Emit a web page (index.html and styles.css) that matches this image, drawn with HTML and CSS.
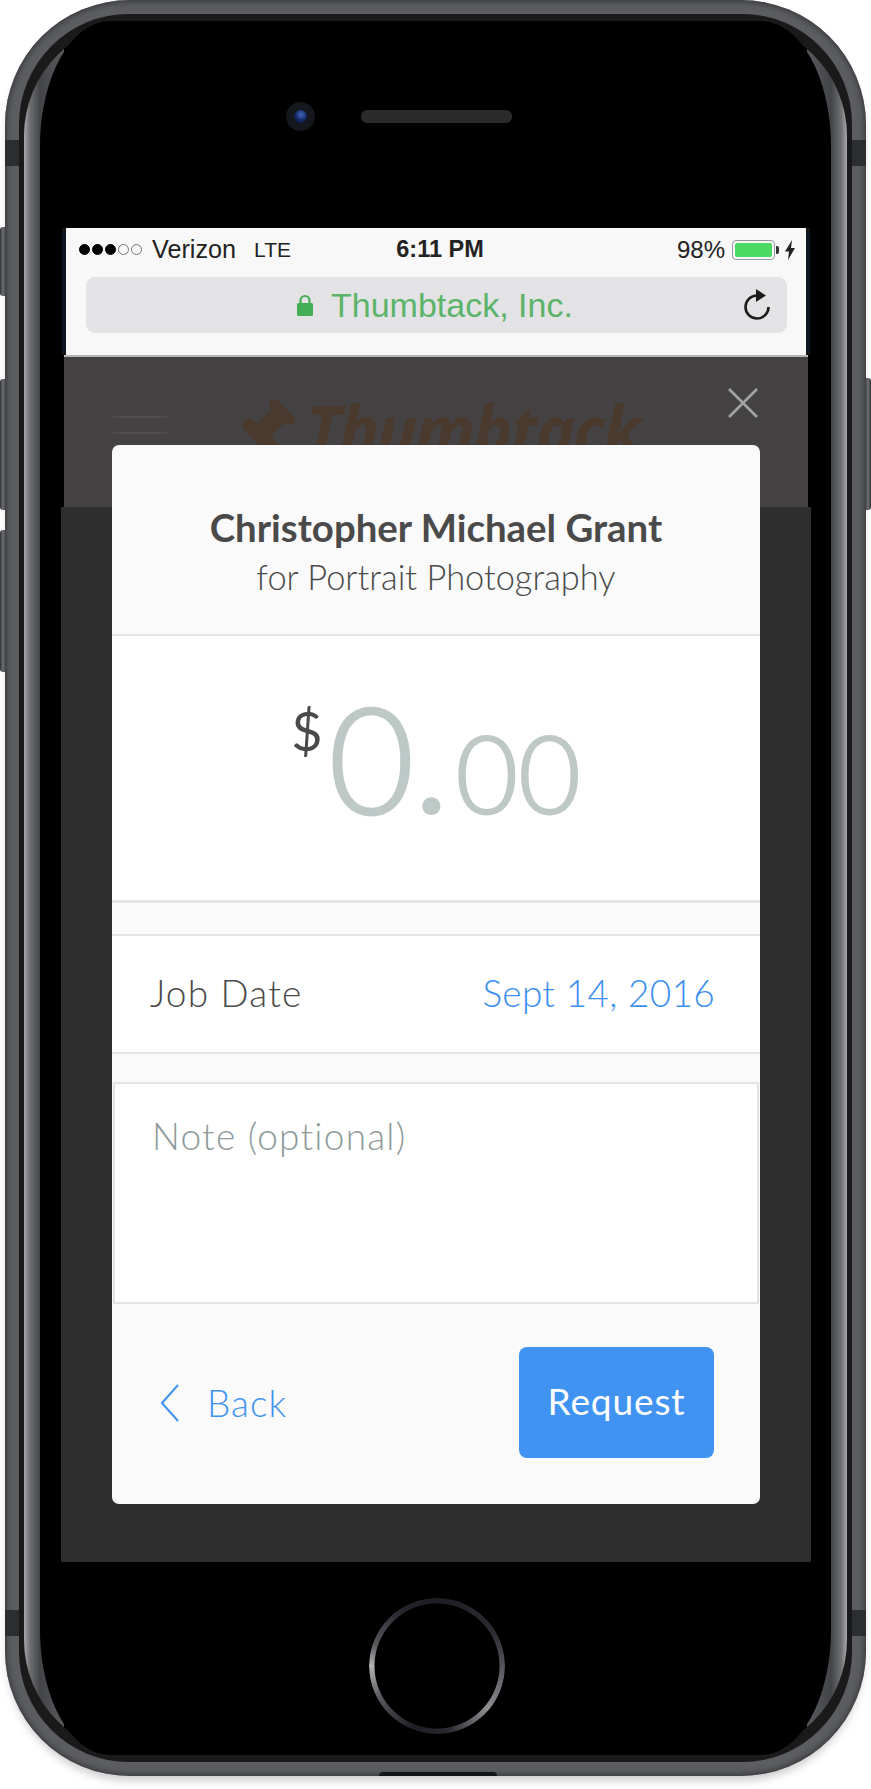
FILE: index.html
```html
<!DOCTYPE html>
<html lang="en">
    <head>
        <meta charset="UTF-8" />
        <meta name="viewport" content="width=device-width, initial-scale=1.0" />
        <link rel="stylesheet" href="styles.css">
        <title>Thumbtack payment request</title>
    </head>
    <body>
        <div class="side-btn mute"></div>
        <div class="side-btn vol-up"></div>
        <div class="side-btn vol-down"></div>
        <div class="side-btn power"></div>
        <div class="phone">
            <div class="antenna left top"></div>
            <div class="antenna right top"></div>
            <div class="antenna left bottom"></div>
            <div class="antenna right bottom"></div>
            <div class="bezel">
                <div class="glass">
                    <div class="face">
                        <div class="sensors">
                            <div class="camera"><span class="lens"></span></div>
                            <div class="speaker"></div>
                        </div>
                        <div class="screen">
                            <div class="chrome">
                                <div class="status">
                                    <div class="status-left">
                                        <span class="signal">
                                            <i class="on"></i><i class="on"></i><i class="on"></i><i></i><i></i>
                                        </span>
                                        <span class="carrier">Verizon</span>
                                        <span class="network">LTE</span>
                                    </div>
                                    <div class="clock">6:11 PM</div>
                                    <div class="status-right">
                                        <span>98%</span>
                                        <span class="battery"><span class="level"></span></span>
                                        <svg class="bolt" width="10" height="20" viewBox="0 0 10 20"><polygon points="7,0 0,11.5 4,11.5 3,20 10,8 6,8" fill="#222" /></svg>
                                    </div>
                                </div>
                                <div class="url-bar">
                                    <div class="url">
                                        <svg width="16" height="22" viewBox="0 0 16 22"><path d="M3.5 10V6.5a4.5 4.5 0 0 1 9 0V10" fill="none" stroke="#44ae57" stroke-width="2.2" /><rect x="0" y="9" width="16" height="13" rx="1.5" fill="#44ae57" /></svg>
                                        <span>Thumbtack, Inc.</span>
                                    </div>
                                    <svg class="reload" width="28" height="32" viewBox="0 0 28 32"><path d="M14 6.5A11.5 11.5 0 1 0 25.5 18" fill="none" stroke="#1c1c1c" stroke-width="2.6" /><polygon points="13,0 23,6.5 13,13" fill="#1c1c1c" /></svg>
                                </div>
                            </div>
                            <div class="site-header">
                                <div class="burger"><i></i><i></i><i></i></div>
                                <svg class="pin" width="70" height="70" viewBox="0 0 70 70">
                                    <g stroke="#4a3a2e" stroke-linecap="round" fill="none">
                                        <path d="M34 9L50 25" stroke-width="10" />
                                        <path d="M41 18L23 36" stroke-width="19" stroke-linecap="butt" />
                                        <path d="M9 30L33 54" stroke-width="14" />
                                    </g>
                                    <path d="M10 44L18 52" stroke="#444243" stroke-width="3" />
                                </svg>
                                <div class="wordmark">Thumbtack</div>
                                <svg class="close" width="30" height="30" viewBox="0 0 30 30"><path d="M1 1L29 29M29 1L1 29" stroke="#a3a3a3" stroke-width="2.6" /></svg>
                            </div>
                            <div class="page-body"></div>

                            <div class="modal">
                                <div class="modal-head">
                                    <div class="pro-name">Christopher Michael Grant</div>
                                    <div class="pro-job">for Portrait Photography</div>
                                </div>
                                <div class="amount">
                                    <span class="currency">$</span>
                                    <span class="dollars">0</span>
                                    <span class="dot">.</span>
                                    <span class="cents">00</span>
                                </div>
                                <div class="date-row">
                                    <span class="date-label">Job Date</span>
                                    <span class="date-value">Sept 14, 2016</span>
                                </div>
                                <div class="note">Note (optional)</div>
                                <div class="modal-foot">
                                    <a class="back">
                                        <svg width="18" height="38" viewBox="0 0 18 38"><path d="M17 1L1 19L17 37" fill="none" stroke="#4193f2" stroke-width="2" /></svg>
                                        <span>Back</span>
                                    </a>
                                    <button class="request" type="button">Request</button>
                                </div>
                            </div>
                        </div>
                        <div class="home"></div>
                    </div>
                </div>
            </div>
            <div class="tab"></div>
        </div>
    </body>
</html>
```

FILE: styles.css
```css
* {
    margin: 0;
    padding: 0;
    box-sizing: border-box;
}

html,
body {
    height: 1789px;
    overflow: hidden;
}

body {
    position: relative;
    width: 871px;
    background-color: white;
    font-family: "Lato", "Liberation Sans", sans-serif;
}

/* device frame */

.phone {
    position: relative;
    width: 861px;
    height: 1776px;
    margin-left: 5px;
    padding: 14px;
    border-radius: 125px;
    background-color: #5c5d60;
    box-shadow: inset 0 0 6px 1px #2f3134, 0 7px 10px -3px rgba(0, 0, 0, 0.22);
}

.bezel {
    height: 100%;
    padding: 7px 5px;
    border-radius: 110px;
    background-color: #1a1a1b;
}

.glass {
    height: 100%;
    padding: 0 16px;
    border-radius: 115px;
    background:
        linear-gradient(90deg, #a8a8a9 0, #6e6f72 6px, #434448 16px, #5a5b5e 40px) left 27px / 40px 1684px no-repeat,
        linear-gradient(270deg, #a8a8a9 0, #6e6f72 6px, #434448 16px, #5a5b5e 40px) right 27px / 40px 1684px no-repeat,
        #000;
}

.face {
    display: flex;
    flex-direction: column;
    height: 100%;
    border-radius: 70px / 125px;
    background-color: #000;
}

.antenna {
    position: absolute;
    width: 14px;
    height: 26px;
    background-color: #2b2e31;
}

.antenna.left {
    left: 0;
}

.antenna.right {
    right: 0;
}

.antenna.top {
    top: 140px;
}

.antenna.bottom {
    top: 1610px;
}

.side-btn {
    position: absolute;
    left: 0;
    width: 7px;
    border-radius: 3px 0 0 3px;
    background: linear-gradient(90deg, #2f3134, #707174 40%, #3e3f43);
}

.mute {
    top: 227px;
    height: 69px;
}

.vol-up {
    top: 379px;
    height: 131px;
}

.vol-down {
    top: 530px;
    height: 142px;
}

.power {
    left: auto;
    right: 0;
    top: 378px;
    height: 132px;
    border-radius: 0 3px 3px 0;
    background: linear-gradient(270deg, #2f3134, #707174 40%, #3e3f43);
}

.tab {
    position: absolute;
    left: 374px;
    bottom: 0;
    width: 118px;
    height: 4px;
    border-radius: 6px 6px 0 0;
    background-color: #141516;
}

.sensors {
    display: flex;
    flex-shrink: 0;
    align-items: center;
    gap: 46px;
    height: 207px;
    padding: 81px 0 97px 246px;
}

.camera {
    display: flex;
    align-items: center;
    justify-content: center;
    width: 29px;
    height: 29px;
    border-radius: 50%;
    background-color: #14171c;
}

.lens {
    width: 13px;
    height: 13px;
    border-radius: 50%;
    background: radial-gradient(circle at 55% 35%, #3f64b8, #0f2158 60%, #08102a);
}

.speaker {
    width: 151px;
    height: 13px;
    border-radius: 6px;
    background-color: #2a2a2b;
}

.home {
    flex-shrink: 0;
    width: 136px;
    height: 136px;
    margin: 36px 0 0 329px;
    border-radius: 50%;
    background: conic-gradient(#1d1d24 0deg, #2b2b33 60deg, #77777c 115deg, #8f8f92 130deg, #2a2a30 170deg, #1c1c22 200deg, #55555a 240deg, #b3b3b5 270deg, #55555a 290deg, #22222a 330deg, #1d1d24 360deg);
    -webkit-mask: radial-gradient(closest-side, transparent 62px, #000 63px);
    mask: radial-gradient(closest-side, transparent 62px, #000 63px);
}

/* screen */

.screen {
    position: relative;
    display: flex;
    flex-direction: column;
    flex-shrink: 0;
    width: 750px;
    height: 1334px;
    margin-left: 21px;
}

.chrome {
    height: 127px;
    margin: 0 1px;
    border-left: 4px solid #10161f;
    border-right: 4px solid #10161f;
    background-color: #f8f8f8;
    font-family: "Liberation Sans", Arial, sans-serif;
    color: #222;
}

.status {
    display: grid;
    grid-template-columns: 1fr auto 1fr;
    align-items: center;
    height: 49px;
    padding: 0 5px 6px 13px;
    font-size: 21px;
}

.status-left {
    display: flex;
    align-items: center;
}

.signal {
    display: flex;
    gap: 2px;
    margin-right: 10px;
}

.signal i {
    width: 11px;
    height: 11px;
    border: 1px solid #777;
    border-radius: 50%;
}

.signal i.on {
    border-color: #000;
    background-color: #000;
}

.carrier {
    font-size: 25.2px;
}

.network {
    margin-left: 18px;
    font-size: 21px;
}

.clock {
    font-weight: bold;
    font-size: 23.5px;
}

.status-right {
    display: flex;
    align-items: center;
    justify-content: flex-end;
    margin-right: 6px;
    font-size: 24px;
}

.battery {
    position: relative;
    display: block;
    width: 43px;
    height: 20px;
    margin: 0 10px 0 7px;
    padding: 2px;
    border: 1px solid #9a9a9a;
    border-radius: 4px;
}

.battery::after {
    content: "";
    position: absolute;
    right: -5px;
    top: 5px;
    width: 3px;
    height: 8px;
    border-radius: 0 2px 2px 0;
    background-color: #333;
}

.level {
    display: block;
    height: 100%;
    border-radius: 2px;
    background-color: #4cd964;
}

.url-bar {
    display: flex;
    align-items: center;
    height: 56px;
    margin: 0 19px 0 20px;
    padding: 0 16px 0 211px;
    border-radius: 9px;
    background-color: #e3e3e5;
}

.url {
    display: flex;
    align-items: center;
    gap: 18px;
    flex: 1;
    font-size: 34px;
    color: #5cb36a;
}

/* dimmed site behind the modal */

.site-header {
    display: flex;
    flex-shrink: 0;
    align-items: flex-start;
    height: 152px;
    margin: 0 3px 0 2.5px;
    padding-left: 49.5px;
    overflow: hidden;
    border-top: 2px solid #b8b5b3;
    background-color: #444243;
}

.burger {
    display: flex;
    flex-direction: column;
    gap: 14px;
    width: 54px;
    margin-top: 59px;
}

.burger i {
    height: 2px;
    background-color: #4f4d4e;
}

.pin {
    flex-shrink: 0;
    margin: 38px 0 0 73px;
}

.wordmark {
    margin: 19px 0 0 -4px;
    font-family: "Open Sans", sans-serif;
    font-size: 66px;
    font-weight: 700;
    font-style: italic;
    letter-spacing: -1.8px;
    line-height: 104px;
    color: #4a3a2e;
}

.close {
    flex-shrink: 0;
    margin: 31px 50px 0 auto;
}

.page-body {
    flex: 1;
    background-color: #2e2e2e;
}

/* modal */

.modal {
    position: absolute;
    left: 51px;
    top: 217px;
    display: flex;
    flex-direction: column;
    width: 648px;
    height: 1059px;
    border-radius: 7px;
    background-color: #fafafa;
    color: #4a4a4a;
    overflow: hidden;
}

.modal-head {
    height: 191px;
    padding-top: 57px;
    border-bottom: 2px solid #e4e4e4;
    text-align: center;
}

.pro-name {
    font-size: 38.4px;
    font-weight: 700;
    line-height: 50px;
}

.pro-job {
    margin-top: 3px;
    font-size: 34.4px;
    font-weight: 300;
    line-height: 44px;
}

.amount {
    display: flex;
    justify-content: center;
    align-items: baseline;
    height: 267px;
    padding-top: 36px;
    border-bottom: 3px solid #e4e4e4;
    background-color: white;
    font-weight: 300;
    color: #bec8c6;
}

.currency {
    align-self: flex-start;
    margin: 24px 6px 0 0;
    font-size: 54px;
    font-weight: 400;
    line-height: 70px;
    color: #4a4a4a;
}

.dollars {
    font-size: 148px;
    line-height: 170px;
    -webkit-text-stroke: 2.5px #bec8c6;
}

.dot {
    margin: 0 11px 0 4px;
    font-size: 110px;
    font-weight: 900;
}

.cents {
    font-size: 108px;
    -webkit-text-stroke: 2px #bec8c6;
}

.date-row {
    display: flex;
    justify-content: space-between;
    align-items: center;
    height: 120px;
    margin-top: 31px;
    padding: 0 45px 3px 38px;
    border-top: 2px solid #e4e4e4;
    border-bottom: 2px solid #e4e4e4;
    background-color: white;
    font-size: 37px;
    font-weight: 300;
}

.date-label {
    letter-spacing: 1.2px;
}

.date-value {
    letter-spacing: 0.3px;
    color: #3d8ff0;
}

.note {
    height: 222px;
    margin: 28px 1px 0;
    padding: 28px 0 0 37px;
    border: 2px solid #e4e4e4;
    background-color: white;
    font-size: 37px;
    font-weight: 300;
    letter-spacing: 1.2px;
    line-height: 48px;
    color: #8f9a9a;
}

.modal-foot {
    display: flex;
    flex: 1;
    justify-content: space-between;
    align-items: center;
    padding: 0 46px 3px 49px;
}

.back {
    display: flex;
    align-items: center;
    gap: 28px;
    font-size: 37px;
    font-weight: 300;
    letter-spacing: 1px;
    color: #4193f2;
}

.request {
    width: 195px;
    height: 111px;
    padding-bottom: 4px;
    border: none;
    border-radius: 8px;
    background-color: #4193f2;
    font-family: inherit;
    font-size: 37px;
    letter-spacing: 0.9px;
    color: white;
}
```
